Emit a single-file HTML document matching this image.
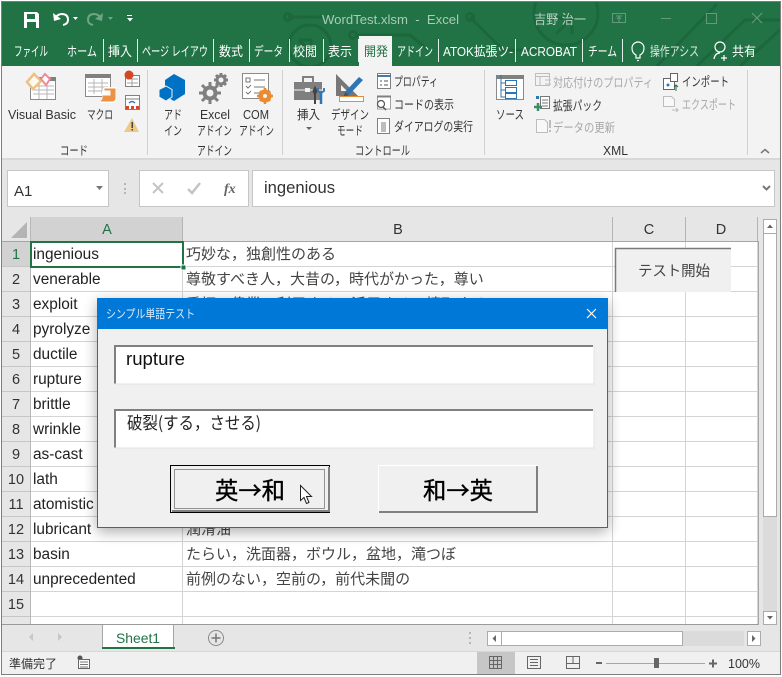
<!DOCTYPE html>
<html lang="ja"><head><meta charset="utf-8"><title>WordTest.xlsm - Excel</title>
<style>
html,body{margin:0;padding:0;background:#fff;width:782px;height:677px;overflow:hidden}
svg{display:block;font-family:"Liberation Sans","Noto Sans CJK JP",sans-serif}
text{white-space:pre}
.w{fill:#fff;font-size:13px}
.r{fill:#333;font-size:12.5px}
.g{fill:#a8a8a8;font-size:12.5px}
.c{fill:#222;font-size:15.4px}
.j{fill:#444;font-size:15px}
.h{fill:#333;font-size:14.5px;text-anchor:middle}
.b{font-family:"Noto Sans CJK JP",sans-serif;font-size:24px;fill:#000;stroke:#000;stroke-width:.35px}
</style></head><body>
<svg width="782" height="677" viewBox="0 0 782 677" xmlns="http://www.w3.org/2000/svg">
<defs>
<filter id="sh" x="-10%" y="-15%" width="120%" height="130%"><feGaussianBlur stdDeviation="7"/></filter>
<clipPath id="win"><rect x="2" y="2" width="778" height="64"/></clipPath>
</defs>
<rect width="782" height="677" fill="#fff"/>
<rect x="1.5" y="1.5" width="779" height="673" fill="#f3f3f3" stroke="#7d7d7d"/>
<!-- title bar -->
<rect x="2" y="2" width="778" height="64" fill="#217346"/>
<g clip-path="url(#win)" fill="none" stroke="#1c673c" stroke-width="3">
<circle cx="310" cy="46" r="21"/><circle cx="566" cy="13" r="32"/>
<path d="M288 17H322M299 40h12v12M299 40l14 14"/>
<path d="M355 35H410L428 50M470 17L503 50H545M556 18h16v16M572 18L556 34"/>
<path d="M657 66L717 4M697 66L745 20H780M740 66L780 30"/>
<circle cx="288" cy="17" r="3.500"/><circle cx="353" cy="35" r="3.500"/><circle cx="470" cy="17" r="3.500"/>
</g>
<!-- QAT -->
<g fill="#fff">
<path d="M24 12h13l2 2v14H24zM27 14v5h8v-5zM27 22v6h9v-6z" fill-rule="evenodd"/>
<path d="M55 19q2-5 7-5q6 0 6 6q0 4-5 5" fill="none" stroke="#fff" stroke-width="2"/>
<path d="M53 13l1 8 7-2z"/>
<path d="M73 17h5l-2.500 3z"/>
<g opacity=".35"><path d="M101 19q-2-5-7-5q-6 0-6 6q0 4 5 5" fill="none" stroke="#fff" stroke-width="2"/><path d="M103 13l-1 8-7-2z"/><path d="M108 17h5l-2.500 3z"/></g>
<path d="M127 15h5v1h-5zM127 18h6l-3 3.500z"/>
</g>
<text x="322" y="24" font-size="13" fill="#a9cbb7" textLength="137" lengthAdjust="spacingAndGlyphs">WordTest.xlsm  -  Excel</text>
<text x="534" y="24" font-size="13" fill="#b9d3c4" textLength="52" lengthAdjust="spacingAndGlyphs">吉野 治一</text>
<g fill="none" stroke="#65997c" stroke-width="1">
<rect x="612.500" y="13.500" width="13" height="9"/><path d="M616 16h6M619 22v-4M617 19l2-2 2 2"/>
<path d="M661 18.500h10"/><rect x="706.500" y="13.500" width="10" height="10"/><path d="M752 13l10 10M762 13l-10 10" stroke-width="1.200"/>
</g>
<!-- ribbon tabs -->
<path d="M359 66V36h33v30z" fill="#f3f3f3"/>
<g stroke="#e3eee8" stroke-width="1">
<path d="M103.500 39v23M137.500 39v23M213.500 39v23M249.500 39v23M289.500 39v23M323.500 39v23M358.500 39v23M438.500 39v23M515.500 39v23M582.500 39v23M622.500 39v23"/>
</g>
<text class="w" x="14" y="56" textLength="34" lengthAdjust="spacingAndGlyphs">ファイル</text>
<text class="w" x="67" y="56" textLength="30" lengthAdjust="spacingAndGlyphs">ホーム</text>
<text class="w" x="108" y="56" textLength="24" lengthAdjust="spacingAndGlyphs">挿入</text>
<text class="w" x="142" y="56" textLength="66" lengthAdjust="spacingAndGlyphs">ページ レイアウ</text>
<text class="w" x="219" y="56" textLength="24" lengthAdjust="spacingAndGlyphs">数式</text>
<text class="w" x="254" y="56" textLength="29" lengthAdjust="spacingAndGlyphs">データ</text>
<text class="w" x="293" y="56" textLength="24" lengthAdjust="spacingAndGlyphs">校閲</text>
<text class="w" x="328" y="56" textLength="24" lengthAdjust="spacingAndGlyphs">表示</text>
<text x="364" y="56" font-size="13" fill="#217346" textLength="24" lengthAdjust="spacingAndGlyphs">開発</text>
<text class="w" x="397" y="56" textLength="36" lengthAdjust="spacingAndGlyphs">アドイン</text>
<text class="w" x="443" y="56" textLength="70" lengthAdjust="spacingAndGlyphs">ATOK拡張ツ-</text>
<text class="w" x="521" y="56" textLength="56" lengthAdjust="spacingAndGlyphs">ACROBAT</text>
<text class="w" x="588" y="56" textLength="29" lengthAdjust="spacingAndGlyphs">チーム</text>
<g fill="none" stroke="#fff" stroke-width="1.200">
<path d="M636 58v-3q-4-2-4-7a6 6 0 0 1 12 0q0 5-4 7v3zM637 60.500h2"/>
<circle cx="720" cy="47" r="5"/><path d="M714 59q1-6 6-6M724 55v6M721 58h6"/>
</g>
<text class="w" x="650" y="56" textLength="49" lengthAdjust="spacingAndGlyphs" style="fill:#dfe9e3">操作アシス</text>
<text class="w" x="732" y="56" textLength="24" lengthAdjust="spacingAndGlyphs">共有</text>

<!-- ribbon -->
<rect x="2" y="66" width="778" height="92" fill="#f3f3f3"/>
<path d="M147.500 70v85M282.500 70v85M484.500 70v85M747.500 70v85" stroke="#d0d0d0"/>
<rect x="2" y="158" width="778" height="2" fill="#d8d8d8"/>
<!-- VB icon -->
<rect x="30.500" y="77.500" width="25" height="22" fill="#fff" stroke="#8a8a8a"/>
<rect x="30" y="77" width="26" height="4" fill="#808080"/>
<path d="M33 86h21M33 90h21M33 94h21M39 82v17M47 82v17" stroke="#b5b5b5"/>
<path d="M27 82l7-8 7 7-8 8z" fill="#fffaf0" stroke="#ebc284" stroke-width="2.500"/>
<path d="M41 79l4-5 5 5-4 6z" fill="#fff" stroke="#e98b98" stroke-width="2"/>
<!-- macro -->
<rect x="85.500" y="74.500" width="25" height="22" fill="#fff" stroke="#8a8a8a"/>
<rect x="85" y="74" width="26" height="4" fill="#808080"/>
<path d="M88 83h20M88 87h20M88 91h14M94 79v15M102 79v15" stroke="#b5b5b5"/>
<path d="M105 88h10v10q0 4-3 4h-11q2-1 2-3v-7z" fill="#fff" stroke="#fff" stroke-width="2"/>
<path d="M105 89h10v9q0 3-3 3h-11q2-1 2-3v-2h8v-6h-6z" fill="#ed9145" stroke="#ed9145"/>
<!-- small -->
<rect x="125.500" y="75.500" width="14" height="11" fill="#fff" stroke="#808080"/><path d="M127 79h11M127 83h11M132 77v9" stroke="#a0a0a0"/><circle cx="129" cy="75" r="4.500" fill="#d24726"/>
<rect x="125.500" y="95.500" width="14" height="14" fill="#fff" stroke="#808080"/><path d="M126 99h13" stroke="#808080"/><path d="M129 103q3-3 6 0" stroke="#2e75b6" fill="none" stroke-width="1.500"/><rect x="126" y="106" width="3" height="3" fill="#d24726"/><rect x="136" y="106" width="3" height="3" fill="#d24726"/><rect x="131" y="106" width="3" height="3" fill="#d24726"/>
<path d="M132 118l7 14h-15z" fill="#edc887"/><path d="M131.500 122h1.500v6h-1.500zM131.500 129h1.500v1.500h-1.500z" fill="#444"/>
<text class="r" x="8" y="119" textLength="68" lengthAdjust="spacingAndGlyphs">Visual Basic</text>
<text class="r" x="87" y="119" textLength="26" lengthAdjust="spacingAndGlyphs">マクロ</text>
<text class="r" x="60" y="155" textLength="28" lengthAdjust="spacingAndGlyphs">コード</text>
<!-- add-ins -->
<path d="M174 74l11 6v14l-11 7-9-5V80z" fill="#0072c6"/>
<path d="M166 86l6 3.500v7.500l-6 4-7-4v-7.500z" fill="#0072c6" stroke="#f3f3f3"/>
<g fill="#808080"><circle cx="210" cy="93" r="7.500"/><circle cx="221" cy="80" r="5.500"/></g>
<g stroke="#808080" stroke-width="3"><path d="M210 82v22M199 93h22M202 85l16 16M218 85l-16 16M221 73v14M214 80h14M216 75l10 10M226 75l-10 10"/></g>
<circle cx="210" cy="93" r="3.500" fill="#f3f3f3"/><circle cx="221" cy="80" r="2.500" fill="#f3f3f3"/>
<rect x="242.500" y="73.500" width="26" height="25" fill="#fff" stroke="#8a8a8a"/>
<path d="M254 80h11M254 87h11M254 93h6" stroke="#777"/><path d="M246 78h4v4h-4z" fill="none" stroke="#777"/><path d="M246 86l2 2 3-3M246 92l2 2 3-3" fill="none" stroke="#777"/>
<circle cx="265" cy="96" r="5" fill="none" stroke="#ed8a2f" stroke-width="3"/>
<path d="M265 88v16M257 96h16M260 91l10 10M270 91l-10 10" stroke="#ed8a2f" stroke-width="2.500"/><circle cx="265" cy="96" r="2" fill="#f3f3f3"/>
<text class="r" x="164" y="119" textLength="18" lengthAdjust="spacingAndGlyphs">アド</text>
<text class="r" x="164" y="135" textLength="18" lengthAdjust="spacingAndGlyphs">イン</text>
<text class="r" x="200" y="119" textLength="30" lengthAdjust="spacingAndGlyphs">Excel</text>
<text class="r" x="197" y="135" textLength="35" lengthAdjust="spacingAndGlyphs">アドイン</text>
<text class="r" x="243" y="119" textLength="26" lengthAdjust="spacingAndGlyphs">COM</text>
<text class="r" x="239" y="135" textLength="35" lengthAdjust="spacingAndGlyphs">アドイン</text>
<text class="r" x="197" y="155" textLength="35" lengthAdjust="spacingAndGlyphs">アドイン</text>
<!-- controls -->
<path d="M294 82h28v18h-28z" fill="#7f7f7f"/><path d="M303 82v-5h10v5" fill="none" stroke="#7f7f7f" stroke-width="2"/><path d="M294 90h28" stroke="#f3f3f3"/><rect x="305" y="88" width="5" height="4" fill="#f3f3f3"/>
<path d="M315 88l-1.500 3 1.500 3 1.500-3zM315 94v10" stroke="#444" stroke-width="2" fill="#444"/>
<path d="M321 93v11" stroke="#2e75b6" stroke-width="2.500"/><path d="M318 88v3l3 2 3-2v-3" fill="none" stroke="#2e75b6" stroke-width="1.800"/>
<path d="M336 74l22 22h-22zM341 85v6h6z" fill="#777" fill-rule="evenodd"/>
<path d="M345 92l14-15 4 3-14 15z" fill="#2e75b6"/><path d="M343 98l2-6 4 3z" fill="#555"/>
<rect x="339.500" y="96.500" width="24" height="5" fill="#fff" stroke="#ed8a2f"/>
<rect x="377.500" y="73.500" width="13" height="15" fill="#fff" stroke="#808080"/><path d="M377 76h14" stroke="#4a76a8" stroke-width="2"/><path d="M380 81h2M384 81h4M380 85h2M384 85h4" stroke="#555"/>
<rect x="377.500" y="96" width="13" height="13" fill="#fff" stroke="#a0a0a0"/><path d="M377 96.500h14" stroke="#808080" stroke-width="2"/><circle cx="381" cy="104" r="3.500" fill="#fff" stroke="#555" stroke-width="1.200"/><path d="M383 107l3 3" stroke="#555" stroke-width="1.500"/>
<rect x="377.500" y="118.500" width="12" height="15" fill="#fff" stroke="#808080"/><rect x="381" y="122" width="5" height="10" fill="#bdbdbd"/>
<text class="r" x="297" y="119" textLength="23" lengthAdjust="spacingAndGlyphs">挿入</text>
<path d="M306 127h6l-3 3z" fill="#666"/>
<text class="r" x="331" y="119" textLength="38" lengthAdjust="spacingAndGlyphs">デザイン</text>
<text class="r" x="337" y="135" textLength="26" lengthAdjust="spacingAndGlyphs">モード</text>
<text class="r" x="394" y="86" textLength="44" lengthAdjust="spacingAndGlyphs">プロパティ</text>
<text class="r" x="394" y="109" textLength="60" lengthAdjust="spacingAndGlyphs">コードの表示</text>
<text class="r" x="394" y="131" textLength="79" lengthAdjust="spacingAndGlyphs">ダイアログの実行</text>
<text class="r" x="355" y="155" textLength="55" lengthAdjust="spacingAndGlyphs">コントロール</text>
<!-- XML -->
<rect x="496.500" y="75.500" width="27" height="24" fill="#fff" stroke="#8a8a8a"/><rect x="496" y="75" width="28" height="4" fill="#808080"/>
<path d="M501 75v22h4M501 83h4M501 90h4" stroke="#2e75b6" fill="none"/>
<rect x="505.500" y="80.500" width="11" height="5" fill="#fff" stroke="#2e75b6"/><rect x="505.500" y="87.500" width="11" height="5" fill="#fff" stroke="#2e75b6"/><rect x="505.500" y="93.500" width="11" height="5" fill="#fff" stroke="#2e75b6"/>
<text class="r" x="496" y="119" textLength="28" lengthAdjust="spacingAndGlyphs">ソース</text>
<g fill="none" stroke="#bdbdbd"><rect x="535.500" y="73.500" width="14" height="12"/><path d="M535 76.500h14M540 76v9M545 80h6M545 84h6"/></g>
<text class="g" x="553" y="87" textLength="100" lengthAdjust="spacingAndGlyphs">対応付けのプロパティ</text>
<rect x="540.500" y="96.500" width="9" height="12" fill="#fff" stroke="#777"/><path d="M542 100h6M542 103h6M542 106h6" stroke="#777"/><path d="M534 107h8M538 103v8" stroke="#3b8d6e" stroke-width="2.500"/><rect x="536" y="96" width="3" height="3" fill="#2e75b6"/>
<text class="r" x="553" y="110" textLength="49" lengthAdjust="spacingAndGlyphs">拡張パック</text>
<path d="M536.500 119.500h8l3 3v10h-11z" fill="#f8f8f8" stroke="#bdbdbd"/><rect x="549" y="120" width="2" height="8" fill="#bdbdbd"/><rect x="549" y="130" width="2" height="2" fill="#bdbdbd"/>
<text class="g" x="553" y="132" textLength="62" lengthAdjust="spacingAndGlyphs">データの更新</text>
<rect x="663.500" y="78.500" width="11" height="11" fill="#fff" stroke="#666"/><rect x="670.500" y="73.500" width="7" height="8" fill="#fff" stroke="#666"/><path d="M676 91v-6M674 87l2-2 2 2" stroke="#217346" fill="none"/><circle cx="668" cy="85" r="1.500" fill="#2e75b6"/>
<text class="r" x="682" y="86" textLength="47" lengthAdjust="spacingAndGlyphs">インポート</text>
<path d="M663.500 96.500h8l3 3v7h-11z" fill="#f8f8f8" stroke="#bdbdbd"/><path d="M672 110h6l-2-2M678 110l-2 2" stroke="#bdbdbd" fill="none"/>
<text class="g" x="682" y="109" textLength="54" lengthAdjust="spacingAndGlyphs">エクスポート</text>
<text class="r" x="603" y="155" textLength="25" lengthAdjust="spacingAndGlyphs">XML</text>
<path d="M761 153l4-3.500 4 3.500" fill="none" stroke="#777" stroke-width="1.500"/>
<!-- formula bar -->
<rect x="2" y="160" width="778" height="57" fill="#e6e6e6"/>
<rect x="7.500" y="170.500" width="101" height="36" fill="#fff" stroke="#c6c6c6"/>
<text x="14" y="196" font-size="15" fill="#333">A1</text>
<path d="M96 186h7l-3.500 4z" fill="#777"/>
<path d="M124 183h2v2h-2zM124 188h2v2h-2zM124 192h2v2h-2z" fill="#b5b5b5"/>
<rect x="139.500" y="170.500" width="109" height="36" fill="#fff" stroke="#c6c6c6"/>
<path d="M153 183l10 10M163 183l-10 10" stroke="#c4c4c4" stroke-width="2"/>
<path d="M188 189l4 4 8-10" stroke="#c4c4c4" stroke-width="2.500" fill="none"/>
<text x="224" y="193" font-size="14" font-family="Liberation Serif" font-style="italic" font-weight="bold" fill="#666">fx</text>
<rect x="252.500" y="170.500" width="522" height="36" fill="#fff" stroke="#c6c6c6"/>
<text x="264" y="193" font-size="16.600" fill="#333">ingenious</text>
<path d="M763 186l3.500 3.500 3.500-3.500" fill="none" stroke="#777" stroke-width="2"/>
<!-- grid -->
<rect x="2" y="217" width="778" height="408" fill="#e6e6e6"/>
<rect x="30" y="241" width="728" height="384" fill="#fff"/>
<rect x="30" y="217" width="153" height="24" fill="#d2d2d2"/>
<rect x="2" y="241" width="28" height="25" fill="#d2d2d2"/>
<path d="M27 222v16h-16z" fill="#b4b4b4"/>
<g stroke="#d4d4d4">
<path d="M30 266.500H758M30 291.500H758M30 316.500H758M30 341.500H758M30 366.500H758M30 391.500H758M30 416.500H758M30 441.500H758M30 466.500H758M30 491.500H758M30 516.500H758M30 541.500H758M30 566.500H758M30 591.500H758M30 616.500H758"/>
<path d="M182.500 241V625M612.500 241V625M685.500 241V625M757.500 241V625"/>
</g>
<path d="M2 241.500H758" stroke="#a6a6a6"/>
<path d="M30.500 217V625" stroke="#b8b8b8"/>
<path d="M182.500 217v24M612.500 217v24M685.500 217v24M757.500 217v24" stroke="#b4b4b4"/>
<path d="M758.500 241V625" stroke="#a6a6a6"/>
<path d="M2 266.500H30M2 291.500H30M2 316.500H30M2 341.500H30M2 366.500H30M2 391.500H30M2 416.500H30M2 441.500H30M2 466.500H30M2 491.500H30M2 516.500H30M2 541.500H30M2 566.500H30M2 591.500H30M2 616.500H30" stroke="#c6c6c6"/>
<text x="107" y="234" font-size="14.500" fill="#217346" text-anchor="middle">A</text>
<text class="h" x="398" y="234">B</text><text class="h" x="649" y="234">C</text><text class="h" x="721" y="234">D</text>
<text class="h" x="16" y="259" style="fill:#217346">1</text>
<text class="h" x="16" y="284">2</text><text class="h" x="16" y="309">3</text><text class="h" x="16" y="334">4</text><text class="h" x="16" y="359">5</text><text class="h" x="16" y="384">6</text><text class="h" x="16" y="409">7</text><text class="h" x="16" y="434">8</text><text class="h" x="16" y="459">9</text><text class="h" x="16" y="484">10</text><text class="h" x="16" y="509">11</text><text class="h" x="16" y="534">12</text><text class="h" x="16" y="559">13</text><text class="h" x="16" y="584">14</text><text class="h" x="16" y="609">15</text><text class="h" x="16" y="634">16</text>
<text class="c" x="33" y="259">ingenious</text>
<text class="c" x="33" y="284">venerable</text>
<text class="c" x="33" y="309">exploit</text>
<text class="c" x="33" y="334">pyrolyze</text>
<text class="c" x="33" y="359">ductile</text>
<text class="c" x="33" y="384">rupture</text>
<text class="c" x="33" y="409">brittle</text>
<text class="c" x="33" y="434">wrinkle</text>
<text class="c" x="33" y="459">as-cast</text>
<text class="c" x="33" y="484">lath</text>
<text class="c" x="33" y="509">atomistic</text>
<text class="c" x="33" y="534">lubricant</text>
<text class="c" x="33" y="559">basin</text>
<text class="c" x="33" y="584">unprecedented</text>
<text class="j" x="186" y="259">巧妙な，独創性のある</text>
<text class="j" x="186" y="284">尊敬すべき人，大昔の，時代がかった，尊い</text>
<text class="j" x="186" y="309">手柄，偉業，利用する，活用する，搾取する</text>
<text class="j" x="186" y="534">潤滑油</text>
<text class="j" x="186" y="559">たらい，洗面器，ボウル，盆地，滝つぼ</text>
<text class="j" x="186" y="584">前例のない，空前の，前代未聞の</text>
<rect x="31" y="242" width="152" height="25" fill="none" stroke="#217346" stroke-width="2"/>
<rect x="181" y="265" width="5" height="5" fill="#217346" stroke="#fff"/>
<!-- sheet button -->
<rect x="615" y="248" width="116" height="44" fill="#f0f0f0"/>
<path d="M615.500 292V248.500H731" fill="none" stroke="#7a7a7a" stroke-width="1.500"/>
<text x="638" y="276" font-size="14.500" fill="#444" textLength="72">テスト開始</text>
<!-- scrollbars -->
<rect x="759" y="217" width="21" height="408" fill="#e6e6e6"/>
<rect x="763" y="233" width="14" height="378" fill="#dbdbdb"/>
<rect x="763.500" y="233.500" width="13" height="283" fill="#fff" stroke="#ababab"/>
<rect x="763.500" y="219.500" width="13" height="14" fill="#fff" stroke="#ababab"/><path d="M767 228h6l-3-3.500z" fill="#666"/>
<rect x="763.500" y="611.500" width="13" height="13" fill="#fff" stroke="#ababab"/><path d="M767 616h6l-3 3.500z" fill="#666"/>
<!-- tabs -->
<rect x="2" y="625" width="778" height="27" fill="#e6e6e6"/>
<path d="M2 624.500H758" stroke="#9a9a9a"/>
<path d="M33 633v8l-4-4zM58 633v8l4-4z" fill="#c6c6c6"/>
<path d="M102.500 625v23h71v-23" fill="#fff" stroke="#a6a6a6"/>
<rect x="102" y="647" width="73" height="2" fill="#217346"/>
<text x="116" y="643" font-size="13.900" fill="#217346">Sheet1</text>
<circle cx="216" cy="638" r="7.500" fill="none" stroke="#8a8a8a"/><path d="M211.500 638h9M216 633.500v9" stroke="#777" stroke-width="1.500"/>
<path d="M469 632h2v2h-2zM469 637h2v2h-2zM469 642h2v2h-2z" fill="#b5b5b5"/>
<rect x="501" y="631" width="243" height="15" fill="#dbdbdb"/>
<rect x="487.500" y="631.500" width="14" height="14" fill="#fff" stroke="#ababab"/><path d="M496 635v7l-3.500-3.500z" fill="#666"/>
<rect x="501.500" y="631.500" width="181" height="14" fill="#fff" stroke="#ababab"/>
<rect x="747.500" y="631.500" width="13" height="14" fill="#fff" stroke="#ababab"/><path d="M752 635v7l3.500-3.500z" fill="#666"/>
<!-- status -->
<rect x="2" y="652" width="778" height="22" fill="#f0f0f0"/>
<path d="M2 651.500H780" stroke="#d6d6d6"/>
<text x="9" y="668" font-size="12" fill="#333" textLength="48" lengthAdjust="spacingAndGlyphs">準備完了</text>
<circle cx="80" cy="658" r="2.500" fill="#555"/><rect x="78.500" y="659.500" width="11" height="9" fill="#fff" stroke="#666"/><path d="M80 662h8M80 664.500h8M80 667h8" stroke="#777"/>
<rect x="477" y="652" width="38" height="22" fill="#c6c6c6"/>
<g fill="none" stroke="#666"><rect x="489.500" y="656.500" width="12" height="12"/><path d="M489 660.500h13M489 664.500h13M493.500 656v13M497.500 656v13"/>
<rect x="527.500" y="656.500" width="13" height="12"/><path d="M530 659.500h8M530 662.500h8M530 665.500h8"/>
<rect x="566.500" y="656.500" width="13" height="12"/><path d="M573 657v6M566 663.500h14"/></g>
<rect x="596" y="662" width="6" height="2" fill="#666"/>
<path d="M606 663.500H705" stroke="#a6a6a6"/>
<rect x="654" y="658" width="5" height="10" fill="#666"/>
<path d="M709 663.500h8M713 659.500v8" stroke="#666" stroke-width="2"/>
<text x="728" y="668" font-size="12.500" fill="#333">100%</text>
<!-- dialog -->
<rect x="97" y="302" width="511" height="230" fill="#000" opacity=".32" filter="url(#sh)"/>
<rect x="97.500" y="298.500" width="510" height="229" fill="#f0f0f0" stroke="#0078d7"/>
<rect x="97" y="298" width="511" height="31" fill="#0078d7"/>
<text x="106" y="318" font-size="12" fill="#dcecfa" textLength="89" lengthAdjust="spacingAndGlyphs">シンプル単語テスト</text>
<path d="M587 309l9 9M596 309l-9 9" stroke="#fff" stroke-width="1.200"/>
<rect x="114" y="345" width="480" height="39" fill="#fff"/>
<path d="M115 384V346H593" fill="none" stroke="#808080" stroke-width="2"/>
<path d="M114 384h480V345" fill="none" stroke="#e3e3e3"/>
<text x="126" y="365" font-size="18" fill="#111" textLength="59" lengthAdjust="spacingAndGlyphs">rupture</text>
<rect x="114" y="409" width="480" height="39" fill="#fff"/>
<path d="M115 448V410H593" fill="none" stroke="#808080" stroke-width="2"/>
<path d="M114 448h480V409" fill="none" stroke="#e3e3e3"/>
<text x="127" y="429" font-size="17" fill="#222" textLength="134" lengthAdjust="spacingAndGlyphs" style="font-family:'Noto Sans CJK JP',sans-serif">破裂(する，させる)</text>
<rect x="170.500" y="465.500" width="159" height="47" fill="#f0f0f0" stroke="#000"/>
<path d="M172 511h157V467" fill="none" stroke="#808080" stroke-width="2"/>
<rect x="174.500" y="469.500" width="150" height="39" fill="none" stroke="#333" stroke-dasharray="1 1"/>
<text class="b" x="215" y="499" textLength="70" lengthAdjust="spacingAndGlyphs">英→和</text>
<path d="M300.500 485.500v15l3.500-3 2.500 6 2.500-1-2.500-6h5z" fill="#fff" stroke="#222"/>
<path d="M378.500 513V465.500H538" fill="none" stroke="#fff"/>
<path d="M379 512h158V466" fill="none" stroke="#808080" stroke-width="2"/>
<text class="b" x="423" y="499" textLength="70" lengthAdjust="spacingAndGlyphs">和→英</text>
</svg>
</body></html>
